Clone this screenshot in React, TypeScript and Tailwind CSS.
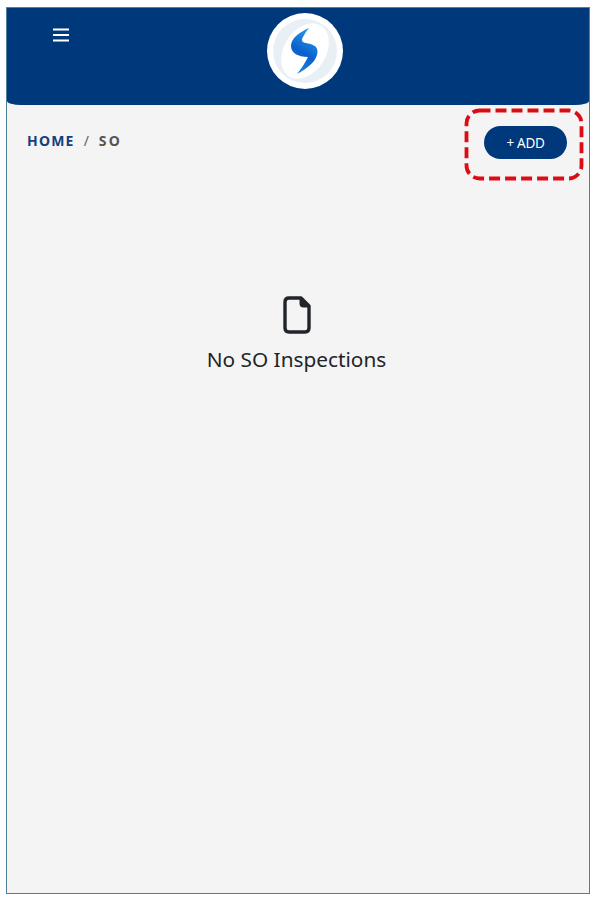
const font = { fontFamily: '"Noto Sans", sans-serif' };

function Logo() {
  return (
    <div className="flex h-[76px] w-[76px] items-center justify-center rounded-full bg-white">
      <svg viewBox="0 0 76 76" className="h-[76px] w-[76px]">
        <defs>
          <linearGradient id="sMark" x1="0.65" y1="0" x2="0.3" y2="1">
            <stop offset="0" stopColor="#2b9cec" />
            <stop offset="0.55" stopColor="#0a5fcc" />
            <stop offset="1" stopColor="#2288e0" />
          </linearGradient>
        </defs>
        <circle cx="38" cy="38" r="32" fill="#e9f0f5" />
        <ellipse cx="38" cy="38" rx="21" ry="30" transform="rotate(32 38 38)" fill="#ffffff" />
        <path
          d="M42 15 C33 19 24 25 24 33 C24 40 31 44 41 44 C38 50 34 56 30 61 C41 55 51 47 50.5 38 C50 32 44 31 39 30 C35 29.5 34 27 36 24 C37.5 21 39.5 18 42 15 Z"
          fill="url(#sMark)"
        />
      </svg>
    </div>
  );
}

export default function App() {
  return (
    <div className="relative h-[905px] w-[596px] overflow-hidden bg-white pt-[7px] pr-[6px] pb-[11px] pl-[6px]" style={font}>
      <div className="flex h-full flex-col border border-[#4f7f9b] bg-[#f4f4f4]">
        <header className="flex h-[97px] shrink-0 items-start rounded-b-[14px_4px] bg-[#00387c]">
          <svg className="ml-[46px] mt-[20px]" width="16" height="14" fill="#ffffff">
            <rect y="0.5" width="16" height="2" />
            <rect y="6" width="16" height="2" />
            <rect y="11.5" width="16" height="2" />
          </svg>
          <div className="ml-[198px] mt-[5px]">
            <Logo />
          </div>
        </header>

        <div className="flex items-start justify-between pl-[20px] pr-[22px] pt-[21px]">
          <nav className="mt-[5px] flex items-center text-[14px] font-bold leading-5">
            <span className="tracking-[1.2px] text-[#15407c]">HOME</span>
            <span className="ml-[9px] mr-[10px] font-normal text-[#5f5f5f]">/</span>
            <span className="tracking-[2.2px] text-[#555555]">SO</span>
          </nav>
          <button className="h-[33px] w-[83px] rounded-full bg-[#00387c] pt-[1px] text-[13.5px] tracking-tight text-white">
            + ADD
          </button>
        </div>

        <div className="mt-[137px] flex flex-col items-center pr-[3px] text-[#212529]">
          <svg viewBox="0 0 28 38" className="h-[38px] w-[28px]" fill="none" stroke="#212529" strokeWidth="3.4" strokeLinejoin="round">
            <path d="M6 2 H18 L26 10 V32 Q26 36 22 36 H6 Q2 36 2 32 V6 Q2 2 6 2 Z" />
            <path d="M17.5 2.5 V7.5 Q17.5 10.5 20.5 10.5 H25.5" fill="#212529" strokeWidth="2" />
          </svg>
          <p className="mt-[11px] text-[20.8px] leading-7">No SO Inspections</p>
        </div>
      </div>

      <svg className="absolute left-[464px] top-[108px]" width="120" height="73" fill="none">
        <rect x="2.5" y="2.5" width="115" height="68" rx="13" stroke="#dc0c14" strokeWidth="3.8" strokeDasharray="11 5" />
      </svg>
    </div>
  );
}
